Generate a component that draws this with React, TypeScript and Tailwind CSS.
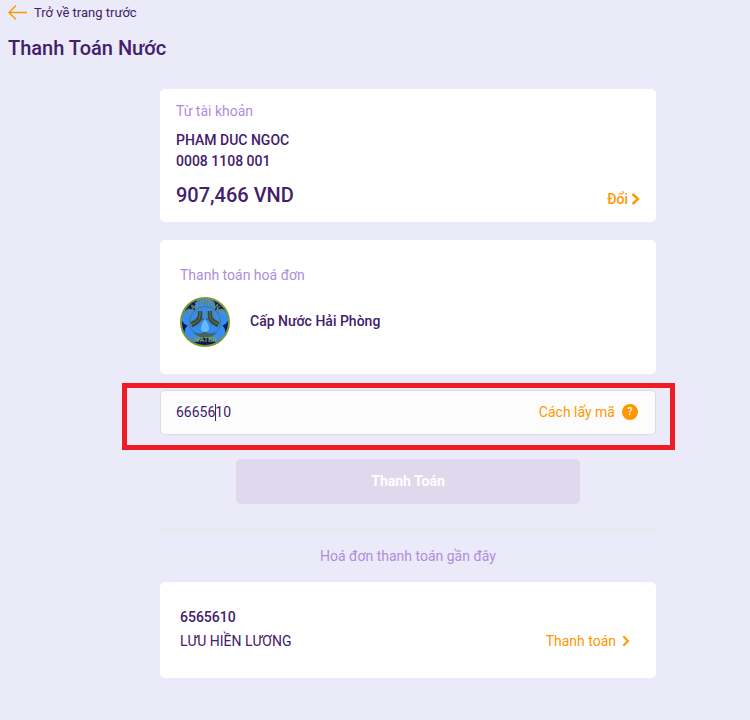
import { useState } from "react";

function BackArrow() {
  return (
    <svg width="20" height="16" viewBox="0 0 20 16" fill="none" stroke="#ff9800" strokeWidth="1.4" aria-hidden="true">
      <path d="M19 7.5H1.2M8 .5L1 7.500l7 7" />
    </svg>
  );
}

function Chevron({ thick = false }: { thick?: boolean }) {
  return thick ? (
    <svg width="9" height="12" viewBox="0 0 9 12" fill="none" stroke="#ff9800" strokeWidth="2.4" aria-hidden="true">
      <path d="M1.5 1l5.5 5-5.5 5" />
    </svg>
  ) : (
    <svg width="8" height="12" viewBox="0 0 8 12" fill="none" stroke="#ff9800" strokeWidth="2" aria-hidden="true">
      <path d="M1.3 1.3L6 6l-4.7 4.7" />
    </svg>
  );
}

function WaterLogo() {
  return (
    <svg width="50" height="50" viewBox="0 0 50 50" role="img" aria-label="Hải Phòng Water">
      <defs>
        <clipPath id="disc">
          <circle cx="25" cy="25" r="23.5" />
        </clipPath>
        <path id="topArc" d="M8 25a17 17 0 0 1 34 0" />
        <path id="bottomArc" d="M8 44.500h34" />
      </defs>
      <circle cx="25" cy="25" r="24" fill="#07195d" />
      <g clipPath="url(#disc)" fill="#348cf4">
        <ellipse cx="25" cy="11" rx="10.500" ry="11" />
        <circle cx="10" cy="20.500" r="8.500" />
        <circle cx="40" cy="20.500" r="8.500" />
        <circle cx="14" cy="35.500" r="9.500" />
        <circle cx="36" cy="35.500" r="9.500" />
        <circle cx="25" cy="29" r="7" />
      </g>
      <circle cx="25" cy="25" r="15.500" fill="none" stroke="#5b7355" strokeWidth="1" />
      <g fill="none" stroke="#2b4750" strokeWidth="6">
        <path d="M20 14v5q0 5-8.500 8.500" />
        <path d="M30 14v5q0 5 8.500 8.500" />
      </g>
      <g fill="none" stroke="#6a7c49" strokeWidth="1">
        <path d="M17.500 14v5q0 3-7 6M20 14v5q0 5-8.500 8.500M22.500 14v7q-1 5-9 9" />
        <path d="M32.500 14v5q0 3 7 6M30 14v5q0 5 8.500 8.500M27.500 14v7q1 5 9 9" />
      </g>
      <path d="M14 35q6 3 11-.5 5 3.500 11 .5-2 5-11 5t-11-5z" fill="#42655f" />
      <path d="M25 34v7" stroke="#42655f" strokeWidth="2" />
      <path d="M25 22q-4 6-4 9a4 4 0 0 0 8 0q0-3-4-9z" fill="#67baff" />
      <text fill="#7b8b42" fontSize="7" fontWeight="700" className="font-['Roboto',sans-serif]">
        <textPath href="#topArc" startOffset="50%" textAnchor="middle">HAI PHONG</textPath>
      </text>
      <text fill="#8c9938" fontSize="7" fontWeight="700" className="font-['Roboto',sans-serif]">
        <textPath href="#bottomArc" startOffset="50%" textAnchor="middle">WATER</textPath>
      </text>
      <circle cx="25" cy="25" r="24" fill="none" stroke="#7d9636" strokeWidth="2" />
    </svg>
  );
}

export default function App() {
  const [code, setCode] = useState("6665610");

  return (
    <div className="min-h-screen bg-[#ebeaf8] font-['Roboto',sans-serif] text-sm text-[#42206b]">
      <header className="px-2 pt-1">
        <a href="#back" className="flex h-[18px] items-center gap-1.5 text-[13px]">
          <BackArrow />
          Trở về trang trước
        </a>
        <h1 className="mt-3 text-xl leading-7 font-medium">Thanh Toán Nước</h1>
      </header>

      <main className="pt-[27px] pr-[94px] pb-10 pl-40">
        <section className="rounded-[5px] bg-white px-4 pt-3 pb-[13px]">
          <h2 className="leading-5 text-[#b08ddb]">Từ tài khoản</h2>
          <p className="mt-[9px] leading-[21px] font-medium">
            PHAM DUC NGOC
            <br />
            0008 1108 001
          </p>
          <div className="mt-[9px] flex items-end justify-between">
            <p className="text-xl leading-7 font-medium">907,466 VND</p>
            <button type="button" className="flex items-center gap-[3px] leading-5 font-medium text-[#ff9800]">
              Đổi
              <Chevron thick />
            </button>
          </div>
        </section>

        <section className="mt-[18px] rounded-[5px] bg-white px-5 pt-[25px] pb-[27px]">
          <h2 className="leading-5 text-[#b08ddb]">Thanh toán hoá đơn</h2>
          <div className="mt-3 flex items-center gap-5">
            <WaterLogo />
            <p className="pb-0.5 font-medium">Cấp Nước Hải Phòng</p>
          </div>
        </section>

        <form onSubmit={(e) => e.preventDefault()}>
          <div className="relative mt-4">
            <div className="flex h-[45px] items-center rounded-[5px] border border-[#e0d8ed] bg-[#fcfcfc] pr-[17px] pb-0.5 pl-[15px]">
              <input
                type="text"
                aria-label="Mã khách hàng"
                value={code}
                onChange={(e) => setCode(e.target.value)}
                className="min-w-0 flex-1 bg-transparent leading-5 outline-none"
              />
              <a href="#help" className="flex items-center gap-[7px] text-[#ff9800]">
                Cách lấy mã
                <span className="flex size-4 items-center justify-center rounded-full bg-[#ff9800] text-[10px] leading-4 font-medium text-white">
                  ?
                </span>
              </a>
            </div>
            <span className="absolute top-3.5 left-[55px] h-[17px] w-px bg-[#42206b]" />
            <div className="pointer-events-none absolute -top-[7px] -right-[19px] -bottom-[15px] -left-[38px] border-5 border-[#ee1c25]" />
          </div>
          <div className="mt-6 px-[76px]">
            <button type="submit" className="h-[45px] w-full rounded-[5px] bg-[#e0d8ec] pb-0.5 font-bold text-white">
              Thanh Toán
            </button>
          </div>
        </form>

        <hr className="mt-6 border-t-3 border-[#e9e8ef]" />
        <h2 className="mt-[15px] text-center leading-5 text-[#b08ddb]">Hoá đơn thanh toán gần đây</h2>

        <section className="mt-4 rounded-[5px] bg-white px-5 pt-[23px] pb-[25px]">
          <p className="leading-6 font-medium">6565610</p>
          <div className="flex items-center justify-between pr-1.5 leading-6">
            <p>LƯU HIỀN LƯƠNG</p>
            <button type="button" className="flex items-center gap-1.5 text-[#ff9800]">
              Thanh toán
              <Chevron />
            </button>
          </div>
        </section>
      </main>
    </div>
  );
}
